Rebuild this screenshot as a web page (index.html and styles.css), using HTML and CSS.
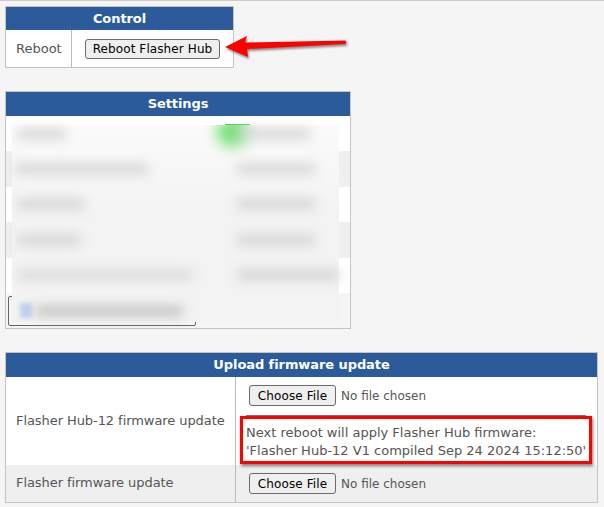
FILE: index.html
```html
<!DOCTYPE html>
<html lang="en">
<head>
<meta charset="utf-8">
<title>Flasher Hub</title>
<link rel="stylesheet" href="styles.css">
</head>
<body>
<main class="page">
  <section class="panel panel-control">
    <h2 class="panel-title">Control</h2>
    <div class="row row-control">
      <div class="cell label">Reboot</div>
      <div class="cell action"><button class="btn" type="button">Reboot Flasher Hub</button></div>
    </div>
  </section>

  <section class="panel panel-settings">
    <h2 class="panel-title">Settings</h2>
    <span class="toggle-edge"></span>
    <div class="veil"><span class="glow"></span></div>
    <div class="row row-settings">
      <div class="cell"><span class="smear s-48"></span></div>
      <div class="cell cell-right"><span class="smear s-70 s-push"></span></div>
    </div>
    <div class="row row-settings alt">
      <div class="cell"><span class="smear s-133 s-out"></span></div>
      <div class="cell cell-right"><span class="smear s-78"></span></div>
    </div>
    <div class="row row-settings">
      <div class="cell"><span class="smear s-66"></span></div>
      <div class="cell cell-right"><span class="smear s-78"></span></div>
    </div>
    <div class="row row-settings alt">
      <div class="cell"><span class="smear s-62"></span></div>
      <div class="cell cell-right"><span class="smear s-78"></span></div>
    </div>
    <div class="row row-settings">
      <div class="cell"><span class="smear s-175"></span></div>
      <div class="cell cell-right"><span class="smear s-102"></span></div>
    </div>
    <div class="settings-foot">
      <div class="ghost-btn"><span class="ghost-icon"></span><span class="smear s-148"></span></div>
    </div>
  </section>

  <section class="panel panel-upload">
    <h2 class="panel-title">Upload firmware update</h2>
    <div class="row row-upload">
      <div class="cell label label-tight">Flasher Hub-12 firmware update</div>
      <div class="cell upload-cell">
        <input class="file" type="file">
        <div class="note">Next reboot will apply Flasher Hub firmware:<br>'Flasher Hub-12 V1 compiled Sep 24 2024 15:12:50'</div>
      </div>
    </div>
    <div class="row row-upload alt">
      <div class="cell label label-tight">Flasher firmware update</div>
      <div class="cell upload-cell upload-short"><input class="file" type="file"></div>
    </div>
  </section>

  <svg class="arrow" width="130" height="30" viewBox="0 0 130 30" aria-hidden="true">
    <path d="M3 16 L25 5 L23 11.500 L123 9.500 Q126 11 123 13 L25 18 L26 26 Z" fill="#fe0000"/>
  </svg>
  <div class="callout"></div>
</main>
</body>
</html>
```
FILE: styles.css
```css
* { box-sizing: border-box; }
html, body { margin: 0; height: 100%; }
body {
  background: #f5f5f5;
  border-top: 1px solid #ccc;
  font-family: "DejaVu Sans", Verdana, sans-serif;
  font-size: 13px;
  color: #555;
  overflow: hidden;
}
.page {
  position: relative;
  height: 506px;
  padding: 5px 0 0 5px;
  display: flex;
  flex-direction: column;
  align-items: flex-start;
}
.panel {
  position: relative;
  border: 1px solid #c4c4c4;
  background: #fff;
}
.panel-control { width: 229px; height: 62px; }
.panel-settings { width: 346px; height: 238px; margin-top: 23px; background: #f5f5f5; overflow: hidden; }
.panel-upload { width: 593px; height: 151px; margin-top: 23px; }
.panel-title {
  margin: 0;
  height: 24px;
  background: #2b5b9b;
  color: #fff;
  font-size: 13px;
  font-weight: 700;
  line-height: 23px;
  text-align: center;
  letter-spacing: -0.08px;
}
.panel-control .panel-title { height: 23px; }

.row { display: grid; align-items: stretch; }
.cell { display: flex; align-items: center; padding-left: 10px; }
.cell + .cell { border-left: 1px solid #bbb; }
.alt { background: #efefef; }
.label-tight { letter-spacing: -0.07px; padding-bottom: 2px; }

.row-control { grid-template-columns: 65px 1fr; height: 37px; }
.action { padding-left: 13px; }
.btn, .file::file-selector-button {
  font-family: "DejaVu Sans", Verdana, sans-serif;
  font-size: 12px;
  letter-spacing: 0.1px;
  color: #000;
  background: #efefef;
  border: 1px solid #6a6a6a;
  border-radius: 3px;
  padding: 0;
}
.btn { width: 135px; height: 20px; }

.row-settings { grid-template-columns: 199px 1fr; height: 35.400px; background: #fff; }
.row-settings.alt { background: #efefef; }
.row-settings .cell { padding-left: 12px; }
.row-settings .cell + .cell { border-left: 1px solid transparent; padding-left: 31px; }
.row-settings:first-of-type .cell + .cell { border-left-color: #bbb; }
.toggle-edge {
  position: absolute;
  left: 219px;
  top: 32px;
  width: 25px;
  height: 1px;
  background: #5cc85c;
}
.veil {
  position: absolute;
  left: 6px;
  top: 33px;
  width: 327px;
  height: 197px;
  overflow: hidden;
  background: linear-gradient(#fbfbfb, #f3f3f3 45%, #f3f3f3);
}
.smear {
  position: relative;
  z-index: 1;
  display: block;
  height: 10px;
  background: #d4d4d4;
  filter: blur(6px);
}
.s-48 { width: 48px; }
.s-62 { width: 62px; }
.s-66 { width: 66px; }
.s-70 { width: 70px; }
.s-78 { width: 78px; }
.s-102 { width: 102px; }
.s-133 { width: 133px; }
.s-148 { width: 148px; background: #c0c0c0; }
.s-175 { width: 175px; background: #dadada; }
.s-out { margin-left: -3px; }
.s-push { margin-left: 3px; }
.glow {
  position: absolute;
  left: 204px;
  top: -8px;
  width: 32px;
  height: 30px;
  border-radius: 50%;
  background: #7be07b;
  filter: blur(7px);
}
.settings-foot { height: 36px; padding: 3px 0 0 2px; }
.ghost-btn {
  display: flex;
  align-items: center;
  gap: 3px;
  width: 188px;
  height: 30px;
  padding-left: 11px;
  border: 1px solid #666;
  border-radius: 2px;
}
.ghost-icon {
  position: relative;
  z-index: 1;
  width: 12px;
  height: 15px;
  background: #bcd2ee;
  filter: blur(2px);
  flex: none;
}

.row-upload { grid-template-columns: 229px 1fr; height: 88px; }
.row-upload.alt { height: 37px; }
.upload-cell { flex-direction: column; align-items: flex-start; padding: 8px 5px 0 13px; }
.upload-short { justify-content: flex-start; padding-top: 8px; }
.file { font: 12px "DejaVu Sans", Verdana, sans-serif; color: #555; height: 21px; width: 300px; }
.file::file-selector-button { width: 87px; height: 21px; margin-right: 5px; }
.note {
  margin: 9px 0 0 -3px;
  width: 340px;
  height: 49px;
  padding-top: 8px;
  border-top: 1px solid #777;
  line-height: 18px;
  white-space: nowrap;
}

.arrow {
  position: absolute;
  left: 222px;
  top: 30px;
  filter: drop-shadow(1px 2px 1px rgba(0,0,0,.45));
}
.callout {
  position: absolute;
  left: 240px;
  top: 415px;
  width: 352px;
  height: 48px;
  border: 3px solid #fe0000;
  box-shadow: 1px 2px 3px rgba(0,0,0,.5);
}
```
